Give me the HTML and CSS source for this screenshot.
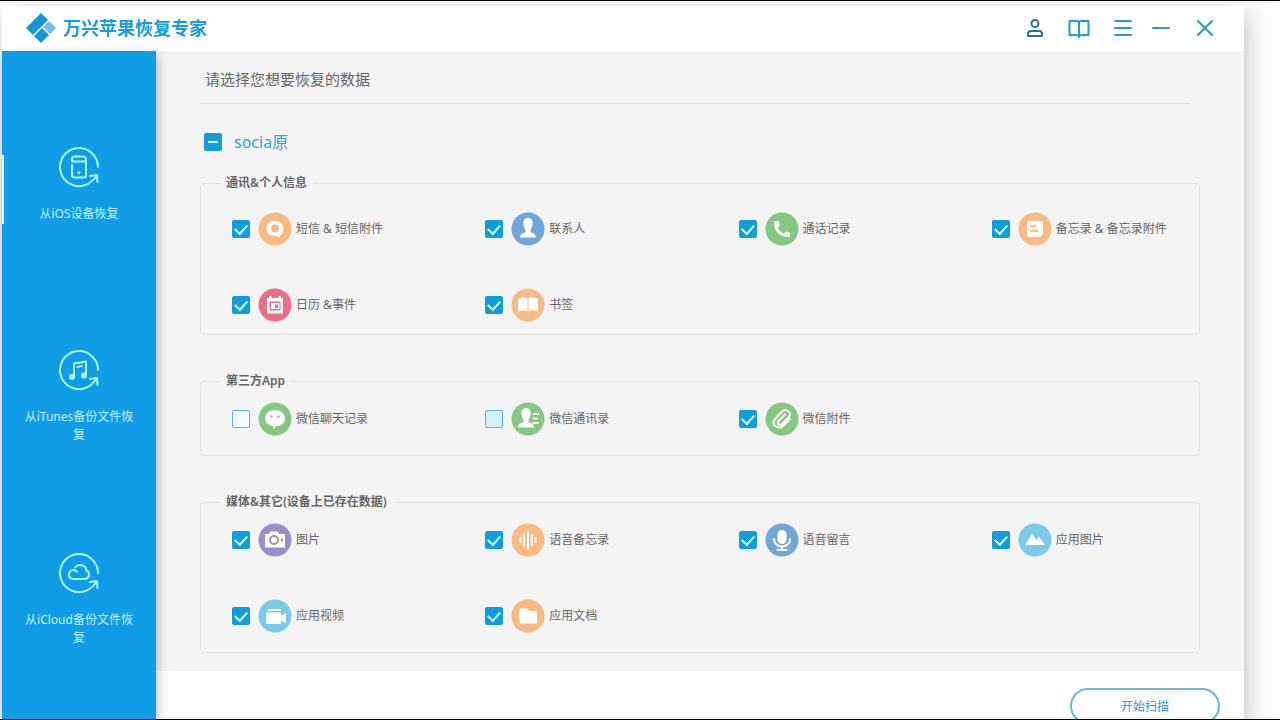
FILE: index.html
```html
<!DOCTYPE html>
<html lang="zh-CN">
<head>
    <meta charset="UTF-8">
    <meta name="viewport" content="width=device-width, initial-scale=1.0">
    <title>万兴苹果恢复专家</title>
    <link rel="stylesheet" href="styles.css">
</head>
<body>
    <div class="window">
        <header class="titlebar">
            <svg class="logo" viewBox="0 0 30 30">
                <path d="M15 0 L22 7 L7 22 L0 15 Z" fill="#1596dc"/>
                <path d="M23 8 L30 15 L24 21 L17 14 Z" fill="#6fbde8"/>
                <path d="M16 15 L23 22 L15 30 L8 23 Z" fill="#1596dc"/>
            </svg>
            <h1>万兴苹果恢复专家</h1>
            <div class="tools">
                <button type="button" class="account" aria-label="账户">
                    <svg viewBox="0 0 24 24"><circle cx="12" cy="7.500" r="3.500"/><path d="M5 20 V18 Q5 15 8 15 H16 Q19 15 19 18 V20 Z"/></svg>
                </button>
                <button type="button" aria-label="指南">
                    <svg viewBox="0 0 24 24"><path d="M12 6 Q11 5 9 5 H2.500 V19 H9.500 Q11 19 12 21 Q13 19 14.500 19 H21.500 V5 H15 Q13 5 12 6 Z M12 6 V21"/></svg>
                </button>
                <button type="button" aria-label="菜单">
                    <svg viewBox="0 0 24 24"><path d="M4 5 H20 M4 12 H20 M4 19 H20"/></svg>
                </button>
            </div>
            <div class="controls">
                <button type="button" aria-label="最小化">
                    <svg viewBox="0 0 24 24"><path d="M4 12 H20"/></svg>
                </button>
                <button type="button" aria-label="关闭">
                    <svg viewBox="0 0 24 24"><path d="M5 5 L19 19 M19 5 L5 19"/></svg>
                </button>
            </div>
        </header>

        <div class="layout">
            <nav class="sidebar">
                <a href="#ios" class="active">
                    <svg viewBox="0 0 42 42">
                        <path d="M40 21 A19 19 0 1 0 29 38.300 Q34 36 39 29.500 M32 30 L39 29 L39.500 36"/>
                        <path d="M16 10.500 H25 Q28 10.500 28 13.500 V29 Q28 31.500 25.500 31.500 H16.500 Q14 31.500 14 29 V19 M14 15.500 V13 Q14 10.500 16 10.500 M14 15.500 H28"/>
                        <circle class="solid" cx="21" cy="26.500" r="1.500"/>
                    </svg>
                    <span>从iOS设备恢复</span>
                </a>
                <a href="#itunes">
                    <svg viewBox="0 0 42 42">
                        <path d="M40 21 A19 19 0 1 0 29 38.300 Q34 36 39 29.500 M32 30 L39 29 L39.500 36"/>
                        <path d="M16 27.500 V14.500 L28 12.500 V26 M19.500 18 L24 17"/>
                        <circle class="solid" cx="14" cy="28" r="3"/>
                        <circle class="solid" cx="26" cy="26.500" r="3"/>
                    </svg>
                    <span>从iTunes备份文件恢复</span>
                </a>
                <a href="#icloud">
                    <svg viewBox="0 0 42 42">
                        <path d="M40 21 A19 19 0 1 0 29 38.300 Q34 36 39 29.500 M32 30 L39 29 L39.500 36"/>
                        <path d="M19 20 A4.500 4.500 0 1 0 15 27 H27 A4.500 4.500 0 0 0 28.500 18.500 A6.500 6.500 0 0 0 17 15.500"/>
                    </svg>
                    <span>从iCloud备份文件恢复</span>
                </a>
            </nav>

            <main>
                <div class="content">
                    <h2>请选择您想要恢复的数据</h2>

                    <label class="select-all">
                        <input type="checkbox" id="selectAll">
                        <span>socia原</span>
                    </label>

                    <fieldset class="group first">
                        <legend>通讯&amp;个人信息</legend>
                        <div class="items">
                            <label class="item">
                                <input type="checkbox" checked>
                                <svg class="orange" viewBox="0 0 34 34"><circle cx="17" cy="17" r="16.500"/><path class="w" d="M17 9 C22 9 25.500 12 25.500 16.500 C25.500 21 22.500 23 20.500 26 L18.500 23.800 C12 24.500 8.500 21 8.500 16.500 C8.500 12 12 9 17 9 Z"/><circle cx="17" cy="16.500" r="4"/></svg>
                                <span>短信 &amp; 短信附件</span>
                            </label>
                            <label class="item">
                                <input type="checkbox" checked>
                                <svg class="blue" viewBox="0 0 34 34"><circle cx="17" cy="17" r="16.500"/><path class="w" d="M17 6 C20.500 6 22 8.500 21.500 12 C21.300 15 20.500 16.500 19.500 18 V20 C22 21.500 25 21.500 25 25.500 H9 C9 21.500 12 21.500 14.500 20 V18 C13.500 16.500 12.700 15 12.500 12 C12 8.500 13.500 6 17 6 Z"/></svg>
                                <span>联系人</span>
                            </label>
                            <label class="item">
                                <input type="checkbox" checked>
                                <svg class="green" viewBox="0 0 34 34"><circle cx="17" cy="17" r="16.500"/><path class="w" d="M9 10 Q9 9 10 9 H13 Q14 9 14.200 10 L15 13.500 L12.700 16 Q15 20 18.500 21.700 L21 19.500 L24 20.300 Q25 20.500 25 21.500 V24 Q25 25.200 24 25.200 Q9 24.500 9 10 Z"/></svg>
                                <span>通话记录</span>
                            </label>
                            <label class="item">
                                <input type="checkbox" checked>
                                <svg class="orange" viewBox="0 0 34 34"><circle cx="17" cy="17" r="16.500"/><path class="w" d="M10 9 H23 Q25 9 25 11 V22 L22 25 H11 Q9 25 9 23 V10 Q9 9 10 9 Z"/><path class="line" d="M12 14 H18 M12 19 H20"/></svg>
                                <span>备忘录 &amp; 备忘录附件</span>
                            </label>
                            <label class="item">
                                <input type="checkbox" checked>
                                <svg class="red" viewBox="0 0 34 34"><circle cx="17" cy="17" r="16.500"/><path class="w" d="M9 10 H11 V8 H13.500 V10 H20.500 V8 H23 V10 H25 V25.500 H9 Z"/><path d="M11.500 13.500 H22.500 V22.500 H11.500 Z"/><path class="w" d="M13 15 H21.500 V21 H13 Z"/><path d="M17 16.500 H20 V20 H17 Z"/></svg>
                                <span>日历 &amp;事件</span>
                            </label>
                            <label class="item">
                                <input type="checkbox" checked>
                                <svg class="orange" viewBox="0 0 34 34"><circle cx="17" cy="17" r="16.500"/><path class="w" d="M7 11 Q12 8 16.500 10.500 V23.500 Q12 21.500 7 23.500 Z M17.500 10.500 Q22 8 27 11 V23.500 Q22 21.500 17.500 23.500 Z"/></svg>
                                <span>书签</span>
                            </label>
                        </div>
                    </fieldset>

                    <fieldset class="group">
                        <legend>第三方App</legend>
                        <div class="items">
                            <label class="item">
                                <input type="checkbox">
                                <svg class="green" viewBox="0 0 34 34"><circle cx="17" cy="17" r="16.500"/><path class="w" d="M17 8 C22.500 8 27 11.500 27 16.500 C27 21.500 22.500 24 19 24 L15.500 27 L15 24 C10 23.500 7 20.500 7 16.500 C7 11.500 11.500 8 17 8 Z"/><circle cx="13.500" cy="14.500" r="1.200"/><circle cx="20.500" cy="14.500" r="1.200"/></svg>
                                <span>微信聊天记录</span>
                            </label>
                            <label class="item">
                                <input type="checkbox" class="hovered">
                                <svg class="green" viewBox="0 0 34 34"><circle cx="17" cy="17" r="16.500"/><path class="w" d="M15 6 C18.500 6 20 8.500 19.500 12 C19.300 15 18.500 16.500 17.500 18 V20 C20 21.500 23 21.500 23 25.500 H7 C7 21.500 10 21.500 12.500 20 V18 C11.500 16.500 10.700 15 10.500 12 C10 8.500 11.500 6 15 6 Z"/><path class="wline" d="M22.500 12 H27 M22.500 16.500 H26 M22.500 21 H27"/></svg>
                                <span>微信通讯录</span>
                            </label>
                            <label class="item">
                                <input type="checkbox" checked>
                                <svg class="green" viewBox="0 0 34 34"><circle cx="17" cy="17" r="16.500"/><path class="wline" d="M25 17 L18.500 23.500 C14 28 5.500 23 9.500 17.500 L17 9.500 C21.500 5.500 27.500 11 23.500 15.500 L17 22 C14.500 24 11.500 21.500 13.500 19 L20 12.500"/></svg>
                                <span>微信附件</span>
                            </label>
                        </div>
                    </fieldset>

                    <fieldset class="group">
                        <legend>媒体&amp;其它(设备上已存在数据)</legend>
                        <div class="items">
                            <label class="item">
                                <input type="checkbox" checked>
                                <svg class="purple" viewBox="0 0 34 34"><circle cx="17" cy="17" r="16.500"/><path class="w" d="M7 11 H11 L12.500 8.500 H19.500 L21 11 H27 V24.500 H7 Z"/><circle cx="16" cy="17" r="5"/><circle class="w" cx="16" cy="17" r="3"/><path d="M23 15.500 H25 V18.500 H23 Z"/></svg>
                                <span>图片</span>
                            </label>
                            <label class="item">
                                <input type="checkbox" checked>
                                <svg class="orange" viewBox="0 0 34 34"><circle cx="17" cy="17" r="16.500"/><path class="wline" d="M9.500 15 V19 M13.200 11.500 V22.500 M17 8.500 V26 M20.800 12 V22.500 M24.500 15 V19"/></svg>
                                <span>语音备忘录</span>
                            </label>
                            <label class="item">
                                <input type="checkbox" checked>
                                <svg class="blue" viewBox="0 0 34 34"><circle cx="17" cy="17" r="16.500"/><rect class="w" x="12.500" y="7" width="9" height="14" rx="4.500"/><path class="wline" d="M9 16 C9 26 25 26 25 16 M17 23.500 V27 M12.500 27 H21.500"/></svg>
                                <span>语音留言</span>
                            </label>
                            <label class="item">
                                <input type="checkbox" checked>
                                <svg class="cyan" viewBox="0 0 34 34"><circle cx="17" cy="17" r="16.500"/><path class="w" d="M7 22 L14 11 L18.500 17 L21 13.500 L27 22 Z"/></svg>
                                <span>应用图片</span>
                            </label>
                            <label class="item">
                                <input type="checkbox" checked>
                                <svg class="cyan" viewBox="0 0 34 34"><circle cx="17" cy="17" r="16.500"/><path class="w" d="M10 10 H23 V12 H10 Z M8 13.500 H23 V17 L28 14 V24.500 L23 21.500 V25 H8 Z"/></svg>
                                <span>应用视频</span>
                            </label>
                            <label class="item">
                                <input type="checkbox" checked>
                                <svg class="orange" viewBox="0 0 34 34"><circle cx="17" cy="17" r="16.500"/><path class="w" d="M8.500 10.500 Q8.500 9.500 9.500 9.500 H16 L18.500 12 H24.500 Q26 12 26 13.500 V23 Q26 24.500 24.500 24.500 H10 Q8.500 24.500 8.500 23 Z"/></svg>
                                <span>应用文档</span>
                            </label>
                        </div>
                    </fieldset>
                </div>

                <footer>
                    <button type="button" class="scan">开始扫描</button>
                </footer>
            </main>
        </div>
    </div>

    <script>
        // some boxes are off, so the top one shows a dash
        let selectAll = document.getElementById('selectAll');
        let boxes = document.querySelectorAll('.item input');

        function updateSelectAll() {
            let count = document.querySelectorAll('.item input:checked').length;
            selectAll.checked = count === boxes.length;
            selectAll.indeterminate = count > 0 && count < boxes.length;
        }

        selectAll.addEventListener('change', function () {
            boxes.forEach(box => box.checked = selectAll.checked);
        });
        boxes.forEach(box => box.addEventListener('change', updateSelectAll));
        updateSelectAll();
    </script>
</body>
</html>
```
FILE: styles.css
```css
* {
    box-sizing: border-box;
}
body {
    margin: 0;
    height: 100vh;
    padding: 5px 36px 0 2px;
    border-top: 1px solid #000;
    border-bottom: 1px solid #000;
    overflow: hidden;
    background: #fdfdfd;
    color: #666;
    font-family: "Noto Sans", "Noto Sans CJK SC", sans-serif;
    font-size: 12px;
    line-height: 18px;
}
h1, h2 {
    margin: 0;
}
button {
    font-family: inherit;
    cursor: pointer;
}
.window {
    display: flex;
    flex-direction: column;
    height: 100%;
    background: #f4f4f4;
    box-shadow: 4px 8px 20px rgba(0, 0, 0, 0.22);
}

/* title bar */
.titlebar {
    display: flex;
    align-items: center;
    flex-shrink: 0;
    height: 45px;
    padding: 0 27px 2px 24px;
    background: #fff;
}
.logo {
    width: 30px;
    height: 30px;
}
.titlebar h1 {
    margin-left: 7px;
    color: #1b9bdc;
    font-size: 18px;
    line-height: 24px;
    font-weight: bold;
}
.tools, .controls {
    display: flex;
    gap: 20px;
}
.tools {
    margin-left: auto;
    margin-right: 14px;
}
.titlebar button {
    width: 24px;
    height: 24px;
    padding: 0;
    border: none;
    background: none;
    color: #2a9cc0;
}
.titlebar .account {
    color: #2f6f9f;
}
.titlebar button svg {
    display: block;
    fill: none;
    stroke: currentColor;
    stroke-width: 2;
    stroke-linecap: round;
    stroke-linejoin: round;
}

/* sidebar */
.layout {
    display: flex;
    flex: 1;
    min-height: 0;
}
.sidebar {
    display: flex;
    flex-direction: column;
    gap: 108px;
    flex-shrink: 0;
    width: 154px;
    padding-top: 95px;
    background: #109de6;
    box-shadow: 3px 4px 10px rgba(0, 0, 0, 0.22);
    z-index: 1;
}
.sidebar a {
    position: relative;
    display: flex;
    flex-direction: column;
    align-items: center;
    gap: 17px;
    min-height: 95px;
    padding: 0 20px;
    color: #c4f1ff;
    text-align: center;
    text-decoration: none;
}
.sidebar a.active::before {
    content: "";
    position: absolute;
    left: 0;
    top: 9px;
    width: 2px;
    height: 69px;
    background: #d8fbff;
}
.sidebar svg {
    width: 42px;
    height: 42px;
    fill: none;
    stroke: #a8f4ff;
    stroke-width: 2;
    stroke-linecap: round;
    stroke-linejoin: round;
}
.sidebar .solid {
    fill: #a8f4ff;
    stroke: none;
}

/* data types */
main {
    display: flex;
    flex-direction: column;
    flex: 1;
    min-width: 0;
}
.content {
    flex: 1;
    padding: 16px 44px 0;
}
.content h2 {
    margin-right: 11px;
    padding: 0 5px 12px;
    border-bottom: 1px solid #dedede;
    font-size: 15px;
    line-height: 24px;
    font-weight: normal;
}
.select-all {
    display: flex;
    align-items: center;
    gap: 12px;
    margin: 26px 0 20px 4px;
    color: #2ba6d8;
    font-size: 16px;
    line-height: 24px;
}
.group {
    min-width: 0;
    margin: 0 0 37px;
    padding: 12px 0 19px 31px;
    border: 1px solid #e2e2e2;
    border-radius: 4px;
}
.group.first {
    padding-top: 20px;
    padding-bottom: 12px;
}
.group:last-child {
    margin-bottom: 0;
}
.group legend {
    margin-left: -12px;
    padding: 0 6px;
    font-weight: 600;
}
.items {
    display: grid;
    grid-template-columns: repeat(4, 1fr);
    gap: 42px 46px;
}
.item {
    display: flex;
    align-items: center;
    white-space: nowrap;
}
.item svg {
    flex-shrink: 0;
    width: 34px;
    height: 34px;
    margin: 0 4px 0 8px;
    fill: currentColor;
}
.item .w {
    fill: #fff;
}
.item .line {
    fill: none;
    stroke: currentColor;
    stroke-width: 2;
}
.item .wline {
    fill: none;
    stroke: #fff;
    stroke-width: 2;
    stroke-linecap: round;
}
.orange {
    color: #f8bb83;
}
.blue {
    color: #70a6d8;
}
.green {
    color: #86c783;
}
.red {
    color: #ea7085;
}
.purple {
    color: #9b8fc7;
}
.cyan {
    color: #7ccbe6;
}

/* check boxes */
input[type="checkbox"] {
    appearance: none;
    display: grid;
    place-items: center;
    flex-shrink: 0;
    width: 18px;
    height: 18px;
    margin: 0;
    border: 1px solid #58b4d8;
    border-radius: 2px;
    background: #f4fcff;
}
input[type="checkbox"].hovered {
    background: #d6effa;
}
input[type="checkbox"]:checked,
input[type="checkbox"]:indeterminate {
    border-color: #109ddb;
    background: #109ddb;
}
input[type="checkbox"]:checked::before {
    content: "";
    width: 6px;
    height: 10px;
    margin-bottom: 2px;
    border: solid #d8ffff;
    border-width: 0 2px 2px 0;
    transform: rotate(42deg);
}
input[type="checkbox"]:indeterminate::before {
    content: "";
    width: 10px;
    height: 2px;
    background: #d8ffff;
}

/* bottom bar */
footer {
    display: flex;
    justify-content: flex-end;
    flex-shrink: 0;
    height: 48px;
    padding: 17px 24px 0;
    background: #fff;
}
.scan {
    flex-shrink: 0;
    width: 150px;
    height: 36px;
    border: 2px solid #6fb8cf;
    border-radius: 18px;
    background: #fff;
    color: #2a9cc8;
    font-size: 12px;
}
```
